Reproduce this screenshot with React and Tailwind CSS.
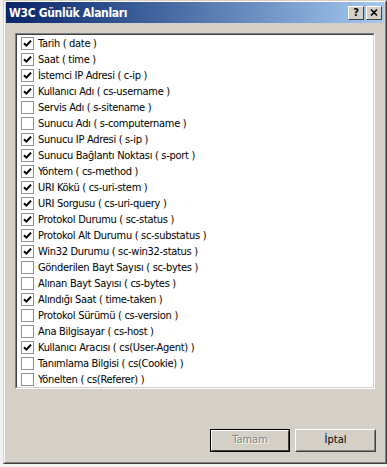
import React from 'react';

const fields = [
  { label: 'Tarih ( date )', checked: true },
  { label: 'Saat ( time )', checked: true },
  { label: 'İstemci IP Adresi ( c-ip )', checked: true },
  { label: 'Kullanıcı Adı ( cs-username )', checked: true },
  { label: 'Servis Adı ( s-sitename )', checked: false },
  { label: 'Sunucu Adı ( s-computername )', checked: false },
  { label: 'Sunucu IP Adresi ( s-ip )', checked: true },
  { label: 'Sunucu Bağlantı Noktası ( s-port )', checked: true },
  { label: 'Yöntem ( cs-method )', checked: true },
  { label: 'URI Kökü ( cs-uri-stem )', checked: true },
  { label: 'URI Sorgusu ( cs-uri-query )', checked: true },
  { label: 'Protokol Durumu ( sc-status )', checked: true },
  { label: 'Protokol Alt Durumu ( sc-substatus )', checked: true },
  { label: 'Win32 Durumu ( sc-win32-status )', checked: true },
  { label: 'Gönderilen Bayt Sayısı ( sc-bytes )', checked: false },
  { label: 'Alınan Bayt Sayısı ( cs-bytes )', checked: false },
  { label: 'Alındığı Saat ( time-taken )', checked: true },
  { label: 'Protokol Sürümü ( cs-version )', checked: false },
  { label: 'Ana Bilgisayar ( cs-host )', checked: false },
  { label: 'Kullanıcı Aracısı ( cs(User-Agent) )', checked: true },
  { label: 'Tanımlama Bilgisi ( cs(Cookie) )', checked: false },
  { label: 'Yönelten ( cs(Referer) )', checked: false },
];

const font = { fontFamily: '"DejaVu Sans Condensed", "Liberation Sans", sans-serif' };

const CheckBox = ({ checked }) => (
  <div className="w-[13px] h-[13px] border border-[#8e8f8f] bg-white flex items-center justify-center shrink-0">
    {checked && (
      <svg width="9" height="9" viewBox="0 0 9 9">
        <path d="M1 4.2 L3.4 6.6 L8 1.6" fill="none" stroke="#000" strokeWidth="2" />
      </svg>
    )}
  </div>
);

const TitleButton = ({ children }) => (
  <div className="w-[16px] h-[14px] bg-[#d4d0c8] border border-t-white border-l-white border-r-[#404040] border-b-[#404040] flex items-center justify-center">
    {children}
  </div>
);

const App = () => {
  return (
    <div className="w-[387px] h-[467px] flex bg-[#f2f2f2] overflow-hidden" style={font}>
      <div className="w-[3px] shrink-0" />
      <div className="w-[384px] h-[464px] border border-t-[#d4d0c8] border-l-[#d4d0c8] border-r-[#404040] border-b-[#404040]">
        <div className="h-full border border-t-white border-l-white border-r-[#808080] border-b-[#808080] bg-[#d4d0c8] flex flex-col">
          {/* başlık çubuğu */}
          <div className="h-[21px] mx-[1px] flex items-center justify-between bg-gradient-to-r from-[#0a246a] to-[#a6caf0] pl-[3px] pr-[2px]">
            <span className="text-white font-bold text-[12px] leading-none tracking-[-0.35px]">W3C Günlük Alanları</span>
            <div className="flex gap-[2px]">
              <TitleButton>
                <span className="text-[11px] font-bold leading-none text-black">?</span>
              </TitleButton>
              <TitleButton>
                <svg width="8" height="7" viewBox="0 0 8 7">
                  <path d="M1 0.5 L7 6.5 M7 0.5 L1 6.5" stroke="#000" strokeWidth="1.6" />
                </svg>
              </TitleButton>
            </div>
          </div>

          {/* alan listesi */}
          <div className="mt-[10px] mx-[10px] border border-t-[#808080] border-l-[#808080] border-r-white border-b-white">
            <div className="border border-t-[#404040] border-l-[#404040] border-r-[#d4d0c8] border-b-[#d4d0c8] bg-white">
              {fields.map((f) => (
                <div key={f.label} className="h-[16px] flex items-center pl-[4px] gap-[4px]">
                  <CheckBox checked={f.checked} />
                  <span className="text-[11px] leading-none text-black whitespace-nowrap tracking-[-0.3px]">{f.label}</span>
                </div>
              ))}
            </div>
          </div>

          <div className="flex-1" />

          {/* düğmeler */}
          <div className="flex justify-end gap-[5px] pr-[9px] pb-[10px]">
            <div className="w-[80px] h-[23px] border border-black">
              <div className="h-full border border-t-white border-l-white border-r-[#404040] border-b-[#404040] flex items-center justify-center">
                <span className="text-[11px] text-[#808080] [text-shadow:1px_1px_0_#ffffff]">Tamam</span>
              </div>
            </div>
            <div className="w-[81px] h-[23px] border border-t-white border-l-white border-r-[#404040] border-b-[#404040]">
              <div className="h-full border border-t-[#d4d0c8] border-l-[#d4d0c8] border-r-[#808080] border-b-[#808080] flex items-center justify-center">
                <span className="text-[11px] text-black">İptal</span>
              </div>
            </div>
          </div>
        </div>
      </div>
    </div>
  );
};

export default App;
